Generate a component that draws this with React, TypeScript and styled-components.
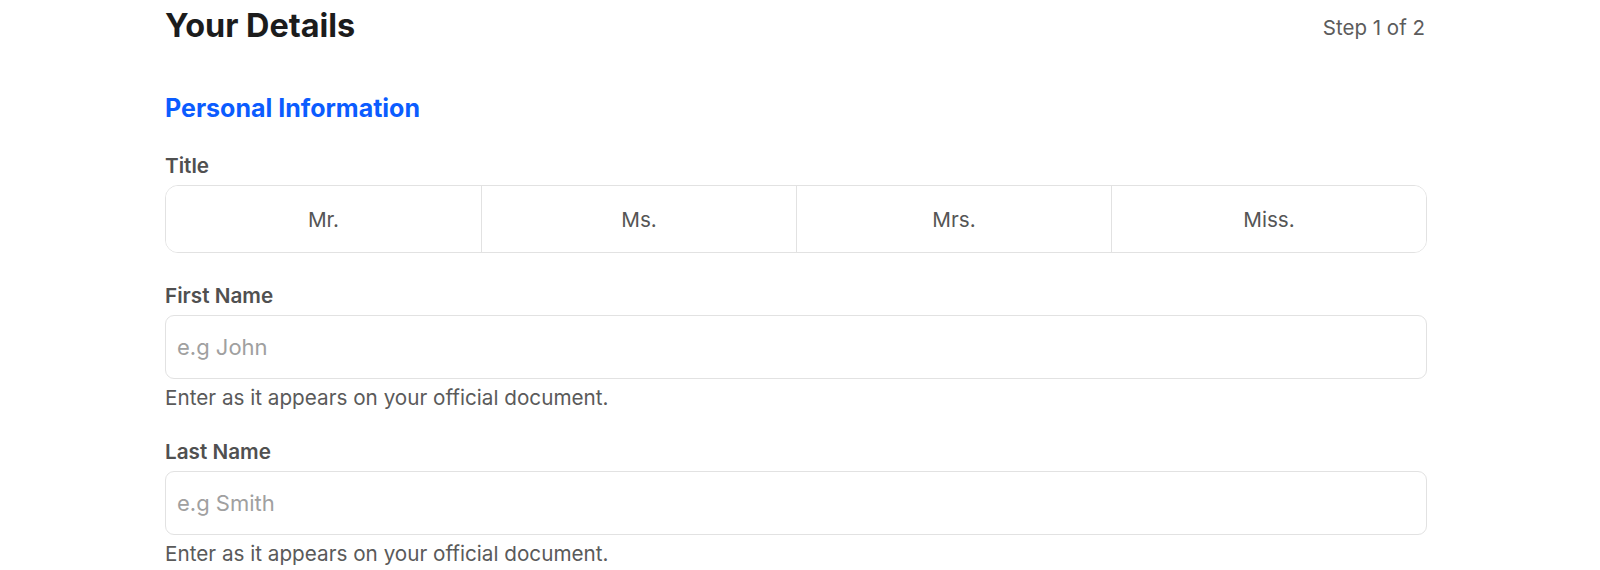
import React from 'react';
import styled, { createGlobalStyle } from 'styled-components';

const TITLES = ['Mr.', 'Ms.', 'Mrs.', 'Miss.'];

const GlobalStyle = createGlobalStyle`
  html, body {
    margin: 0;
    padding: 0;
    background: #ffffff;
  }
  body {
    font-family: Inter, "Noto Sans", "Liberation Sans", sans-serif;
    -webkit-font-smoothing: antialiased;
  }
`;

const Page = styled.div`
  padding: 7px 0 0 165px;
`;

const Form = styled.div`
  width: 1262px;
  display: flex;
  flex-direction: column;
`;

const Header = styled.div`
  display: flex;
  justify-content: space-between;
  align-items: flex-start;
`;

const Heading = styled.h1`
  margin: 0;
  font-size: 32.4px;
  line-height: 38px;
  font-weight: 700;
  color: #1c1c1c;
`;

const StepText = styled.span`
  margin: 8px 2px 0 0;
  font-size: 20.5px;
  line-height: 26px;
  color: #5c5c5c;
`;

const SectionTitle = styled.h2`
  margin: 48px 0 0;
  font-size: 25px;
  line-height: 30px;
  font-weight: 700;
  color: #0b5cff;
`;

const Field = styled.div<{ $gap: number }>`
  display: flex;
  flex-direction: column;
  margin-top: ${p => p.$gap}px;
`;

const Label = styled.label`
  font-size: 20.7px;
  line-height: 26px;
  font-weight: 600;
  color: #505050;
  margin-bottom: 6px;
`;

const Segmented = styled.div`
  display: grid;
  grid-template-columns: repeat(4, 1fr);
  height: 68px;
  border: 1px solid #e2e2e2;
  border-radius: 13px;
  overflow: hidden;
  box-sizing: border-box;
`;

const Segment = styled.button`
  border: none;
  border-left: 1px solid #e2e2e2;
  background: #ffffff;
  font-family: inherit;
  font-size: 20.7px;
  color: #555555;
  cursor: pointer;

  &:first-child {
    border-left: none;
  }
`;

const Input = styled.input`
  height: 64px;
  box-sizing: border-box;
  border: 1px solid #e2e2e2;
  border-radius: 9px;
  padding: 0 11px;
  font-family: inherit;
  font-size: 22px;
  color: #1c1c1c;
  outline: none;

  &::placeholder {
    color: #a0a0a0;
  }
`;

const Help = styled.span`
  margin-top: 6px;
  font-size: 20.7px;
  line-height: 26px;
  color: #5a5a5a;
`;

export default function App() {
  return (
    <>
      <GlobalStyle />
      <Page>
        <Form>
          <Header>
            <Heading>Your Details</Heading>
            <StepText>Step 1 of 2</StepText>
          </Header>
          <SectionTitle>Personal Information</SectionTitle>
          <Field $gap={30}>
            <Label>Title</Label>
            <Segmented>
              {TITLES.map(t => (
                <Segment key={t} type="button">{t}</Segment>
              ))}
            </Segmented>
          </Field>
          <Field $gap={30}>
            <Label>First Name</Label>
            <Input placeholder="e.g John" />
            <Help>Enter as it appears on your official document.</Help>
          </Field>
          <Field $gap={28}>
            <Label>Last Name</Label>
            <Input placeholder="e.g Smith" />
            <Help>Enter as it appears on your official document.</Help>
          </Field>
        </Form>
      </Page>
    </>
  );
}
